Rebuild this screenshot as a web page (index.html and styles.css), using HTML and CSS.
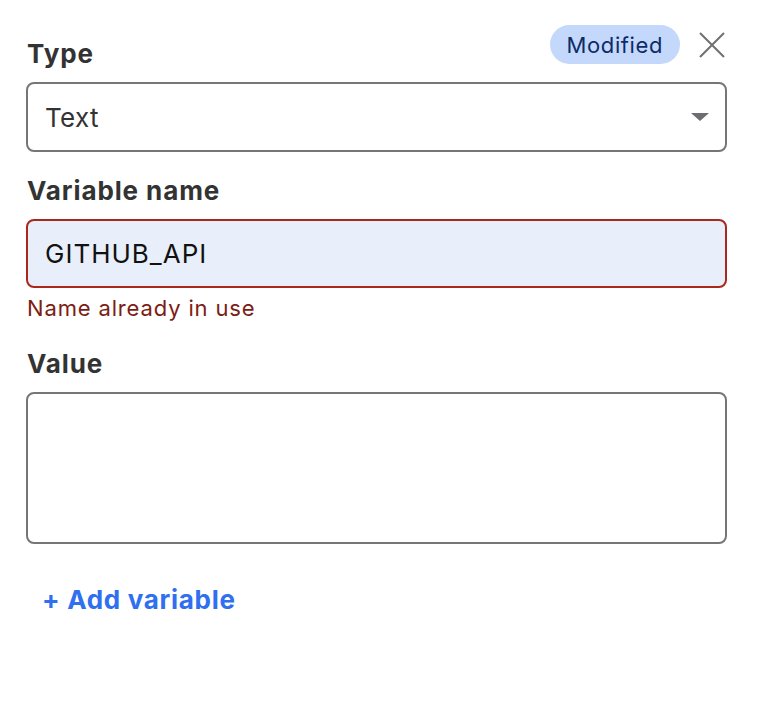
FILE: index.html
```html
<!DOCTYPE html>
<html lang="en">
<head>
<meta charset="utf-8">
<title>Variable</title>
<link rel="stylesheet" href="styles.css">
</head>
<body>
<div class="panel">
  <div class="head-row">
    <label class="label label-first">Type</label>
    <div class="actions">
      <span class="badge">Modified</span>
      <button class="close" aria-label="Close">
        <svg width="26" height="26" viewBox="0 0 26 26"><path d="M1 1 L25 25 M25 1 L1 25" stroke="#707070" stroke-width="2" fill="none"/></svg>
      </button>
    </div>
  </div>
  <div class="select">
    <span class="select-text">Text</span>
    <span class="caret"></span>
  </div>

  <label class="label label-gap">Variable name</label>
  <div class="input input-error">GITHUB_API</div>
  <div class="error">Name already in use</div>

  <label class="label label-value">Value</label>
  <div class="textarea"></div>

  <button class="add">+ Add variable</button>
</div>
</body>
</html>
```
FILE: styles.css
```css
* { box-sizing: border-box; }
html, body { margin: 0; background: #fff; }
body { font-family: Inter, "Noto Sans", sans-serif; color: #333; }

.panel {
  width: 758px;
  padding: 25px 31px 0 26px;
  display: flex;
  flex-direction: column;
}

.head-row {
  display: flex;
  justify-content: space-between;
  align-items: flex-start;
}

.label {
  display: block;
  font-size: 26px;
  line-height: 30px;
  font-weight: 700;
  letter-spacing: 0.9px;
  color: #333;
  padding-left: 1px;
}
.label-first { margin-top: 14px; }
.label-gap { margin-top: 24px; }
.label-value { margin-top: 27px; }

.actions {
  display: flex;
  align-items: center;
  gap: 19px;
}

.badge {
  display: inline-flex;
  align-items: center;
  height: 39px;
  padding: 0 17px;
  border-radius: 20px;
  background: #c3d8fb;
  color: #0f2b66;
  font-size: 22px;
  font-weight: 400;
  letter-spacing: 0.6px;
}

.close {
  border: 0;
  background: none;
  padding: 0;
  margin-right: 2px;
  width: 26px;
  height: 26px;
  display: flex;
}

.select {
  margin-top: 13px;
  height: 70px;
  border: 2px solid #767676;
  border-radius: 8px;
  display: flex;
  align-items: center;
  justify-content: space-between;
  padding: 0 16px 0 17px;
}
.select-text { font-size: 26px; color: #333; letter-spacing: 0.3px; }
.caret {
  width: 0; height: 0;
  border-left: 9.5px solid transparent;
  border-right: 9.5px solid transparent;
  border-top: 8px solid #6d6e72;
}

.input {
  margin-top: 13px;
  height: 69px;
  border: 2px solid #767676;
  border-radius: 8px;
  display: flex;
  align-items: center;
  padding: 0 17px;
  font-size: 26px;
  letter-spacing: 1px;
  color: #111;
}
.input-error {
  border-color: #a8281c;
  background: #e8effb;
}

.error {
  margin-top: 6px;
  font-size: 22px;
  line-height: 28px;
  letter-spacing: 0.85px;
  color: #7c1d14;
  padding-left: 1px;
}

.textarea {
  margin-top: 13px;
  height: 152px;
  border: 2px solid #767676;
  border-radius: 8px;
}

.add {
  align-self: flex-start;
  margin-top: 40px;
  border: 0;
  background: none;
  padding: 0 0 0 16px;
  font-family: Inter, "Noto Sans", sans-serif;
  font-size: 26px;
  line-height: 32px;
  font-weight: 700;
  letter-spacing: 0.7px;
  color: #2f6ff0;
}
```
